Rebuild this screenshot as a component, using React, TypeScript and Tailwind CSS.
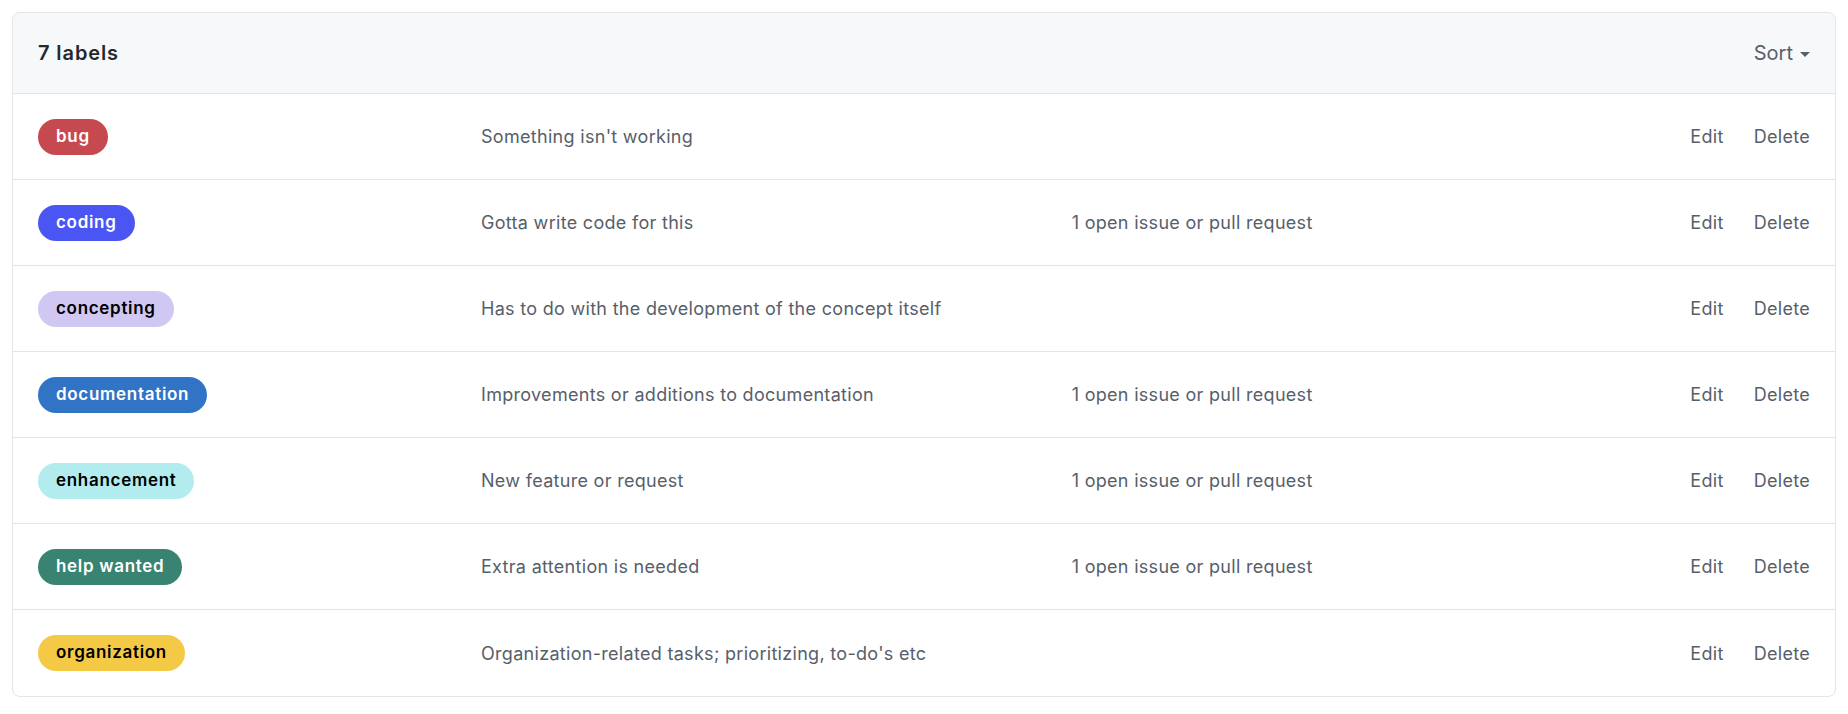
import React from 'react';

type Label = {
  name: string;
  description: string;
  count?: string;
  bg: string;
  fg: string;
};

const labels: Label[] = [
  { name: 'bug', description: "Something isn't working", bg: 'bg-[#c74950]', fg: 'text-white' },
  { name: 'coding', description: 'Gotta write code for this', count: '1 open issue or pull request', bg: 'bg-[#4a55f4]', fg: 'text-white' },
  { name: 'concepting', description: 'Has to do with the development of the concept itself', bg: 'bg-[#d1c7f3]', fg: 'text-black' },
  { name: 'documentation', description: 'Improvements or additions to documentation', count: '1 open issue or pull request', bg: 'bg-[#3174c5]', fg: 'text-white' },
  { name: 'enhancement', description: 'New feature or request', count: '1 open issue or pull request', bg: 'bg-[#b2ecee]', fg: 'text-black' },
  { name: 'help wanted', description: 'Extra attention is needed', count: '1 open issue or pull request', bg: 'bg-[#398372]', fg: 'text-white' },
  { name: 'organization', description: "Organization-related tasks; prioritizing, to-do's etc", bg: 'bg-[#f4c946]', fg: 'text-black' },
];

export default function App() {
  return (
    <div className="min-h-screen bg-white p-3 font-['Inter',sans-serif]">
      <div className="rounded-lg border border-[#e1e4e8] overflow-hidden">
        {/* header */}
        <div className="flex h-[81px] items-center justify-between bg-[#f6f8fa] px-[25px] border-b border-[#e1e4e8]">
          <h2 className="text-[20px] font-semibold tracking-[0.9px] text-[#24292f]">7 labels</h2>
          <button className="flex items-center gap-[7px] text-[20px] text-[#57606a]">
            Sort
            <span className="mt-[2px] h-0 w-0 border-x-[5px] border-t-[5px] border-x-transparent border-t-[#57606a]" />
          </button>
        </div>

        {labels.map((label, i) => (
          <div
            key={label.name}
            className={`grid h-[86px] grid-cols-12 items-center px-[25px] text-[18px] tracking-[0.3px] text-[#57606a] ${
              i < labels.length - 1 ? 'border-b border-[#e1e4e8]' : ''
            }`}
          >
            <div className="col-span-3">
              <span
                className={`inline-flex h-9 items-center rounded-full px-[18px] text-[17px] font-semibold tracking-[0.7px] ${label.bg} ${label.fg}`}
              >
                {label.name}
              </span>
            </div>
            <div className="col-span-4">{label.description}</div>
            <div className="col-span-3">{label.count}</div>
            <div className="col-span-2 flex justify-end gap-[30px]">
              <button>Edit</button>
              <button>Delete</button>
            </div>
          </div>
        ))}
      </div>
    </div>
  );
}
